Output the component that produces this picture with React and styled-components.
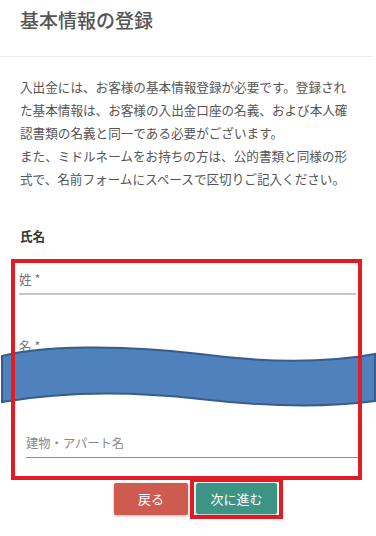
import styled, { createGlobalStyle } from 'styled-components'

const GlobalStyle = createGlobalStyle`
body {
	margin: 0;
	background: #ffffff;
	font-family: "Noto Sans CJK JP", "Noto Sans", sans-serif;
}
`

const Page = styled.div`
position: relative;
width: 376px;
min-height: 536px;
background: #ffffff;
`

const Header = styled.div`
padding: 10px 20px 26px;
margin-right: 4px;
border-bottom: 1px solid #ececec;
`

const Title = styled.h2`
margin: 0;
font-size: 19px;
line-height: 20px;
font-weight: 500;
color: #555555;
`

const Body = styled.div`
padding: 0 20px;
`

const Lead = styled.p`
margin: 18px 0 0;
font-size: 12.6px;
line-height: 23px;
color: #555555;
`

const SectionTitle = styled.h3`
margin: 36px 0 0;
font-size: 12.6px;
line-height: 20px;
font-weight: 700;
color: #333333;
`

const Highlight = styled.div`
position: relative;
margin: 13px 0 0 -9px;
width: 351px;
box-sizing: border-box;
padding: 7px 6px 22px 8px;

&::after {
	content: '';
	position: absolute;
	inset: 0;
	border: 4px solid #e31b25;
	z-index: 3;
	pointer-events: none;
}
`

const Field = styled.div`
margin: ${p => p.$top || 0}px ${p => p.$right || 0}px 0 ${p => p.$left || 0}px;
padding: 4px 0 ${p => p.$pad || 5}px;
border-bottom: ${p => p.$line || '2px solid #c6c6c6'};
font-size: ${p => p.$size || 12.6}px;
line-height: 18px;
color: ${p => p.$color || '#777777'};
`

const Redaction = styled.svg`
position: absolute;
left: 0;
top: 345px;
width: 376px;
height: 65px;
z-index: 2;
`

const ButtonRow = styled.div`
display: flex;
align-items: center;
gap: 2px;
padding-left: 114px;
margin-top: -2px;
`

const Button = styled.button`
width: ${p => p.$width}px;
height: ${p => p.$height}px;
border: none;
border-radius: 2px;
background-color: ${p => p.$bg};
color: #ffffff;
font-family: inherit;
font-size: 13px;
box-shadow: 0 1px 3px rgba(0, 0, 0, 0.3);
cursor: pointer;
`

const Marked = styled.div`
display: flex;
padding: 1px 2px;
border: 4px solid #e31b25;
`

const App = () => {
	return (
		<Page>
			<GlobalStyle />
			<Header>
				<Title>基本情報の登録</Title>
			</Header>
			<Body>
				<Lead>
					入出金には、お客様の基本情報登録が必要です。登録された基本情報は、お客様の入出金口座の名義、および本人確認書類の名義と同一である必要がございます。
					<br />
					また、ミドルネームをお持ちの方は、公的書類と同様の形式で、名前フォームにスペースで区切りご記入ください。
				</Lead>
				<SectionTitle>氏名</SectionTitle>
				<Highlight>
					<Field>姓 *</Field>
					<Field $top={38} $pad={7}>名 *</Field>
					<Field $top={66} $left={7} $right={-6} $line="1px solid #8f8f8f" $color="#888888" $size={12.3}>
						建物・アパート名
					</Field>
				</Highlight>
			</Body>
			<Redaction viewBox="0 345 376 65">
				<path
					d="M2,356 C40,346 120,344 200,354 C260,362 320,364 375,354 L375,401 C330,407 270,407 200,399 C130,391 60,392 2,402 Z"
					fill="#4f81bd"
					stroke="#385d8a"
					strokeWidth="2"
				/>
			</Redaction>
			<ButtonRow>
				<Button $width={74} $height={32} $bg="#cf5b50">戻る</Button>
				<Marked>
					<Button $width={81} $height={31} $bg="#3e9484">次に進む</Button>
				</Marked>
			</ButtonRow>
		</Page>
	)
}

export default App
